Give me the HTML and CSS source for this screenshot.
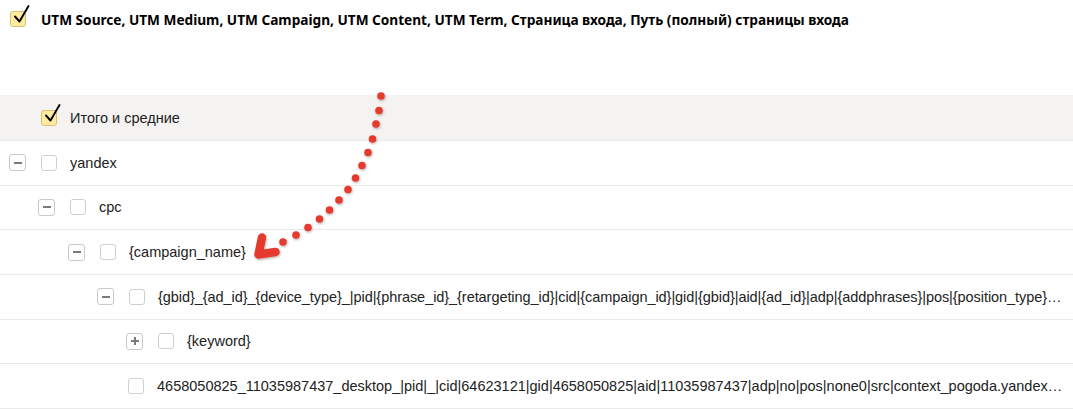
FILE: index.html
```html
<!DOCTYPE html>
<html lang="ru">
<head>
<meta charset="utf-8">
<title>Отчёт</title>
<link rel="stylesheet" href="styles.css">
</head>
<body>
<div class="page">
  <div class="top">
    <span class="cb checked"><svg class="tick" viewBox="0 0 20 22" width="20" height="22"><path d="M3 12.5 L7.5 17.5 L16.5 2" fill="none" stroke="#000" stroke-width="1.9" stroke-linecap="round" stroke-linejoin="round"/></svg></span>
    <span class="title">UTM Source, UTM Medium, UTM Campaign, UTM Content, UTM Term, Страница входа, Путь (полный) страницы входа</span>
  </div>

  <div class="table">
    <div class="row head">
      <span class="cb checked"><svg class="tick" viewBox="0 0 20 22" width="20" height="22"><path d="M3 12.5 L7.5 17.5 L16.5 2" fill="none" stroke="#000" stroke-width="1.9" stroke-linecap="round" stroke-linejoin="round"/></svg></span>
      <span class="label">Итого и средние</span>
    </div>
    <div class="row l0">
      <span class="tg minus"></span><span class="cb"></span><span class="label">yandex</span>
    </div>
    <div class="row l1">
      <span class="tg minus"></span><span class="cb"></span><span class="label">cpc</span>
    </div>
    <div class="row l2">
      <span class="tg minus"></span><span class="cb"></span><span class="label">{campaign_name}</span>
    </div>
    <div class="row l3">
      <span class="tg minus"></span><span class="cb"></span><span class="label wide">{gbid}_{ad_id}_{device_type}_|pid|{phrase_id}_{retargeting_id}|cid|{campaign_id}|gid|{gbid}|aid|{ad_id}|adp|{addphrases}|pos|{position_type}{position}|src|{source_type}_{source}|dvc|{device_type}</span>
    </div>
    <div class="row l4">
      <span class="tg plus"></span><span class="cb"></span><span class="label">{keyword}</span>
    </div>
    <div class="row leaf">
      <span class="cb"></span><span class="label">4658050825_11035987437_desktop_|pid|_|cid|64623121|gid|4658050825|aid|11035987437|adp|no|pos|none0|src|context_pogoda.yandex.ru|dvc|desktop</span>
    </div>
  </div>

  <svg class="arrow" width="1073" height="410" viewBox="0 0 1073 410">
    <defs>
      <filter id="sh" x="-50%" y="-50%" width="200%" height="200%">
        <feDropShadow dx="0.6" dy="1.2" stdDeviation="0.8" flood-color="#000" flood-opacity="0.3"/>
      </filter>
    </defs>
    <g fill="#e53a2f" filter="url(#sh)">
      <circle cx="381" cy="96" r="3.8"/>
      <circle cx="379" cy="110.5" r="3.8"/>
      <circle cx="376" cy="124" r="3.8"/>
      <circle cx="372.5" cy="139" r="3.8"/>
      <circle cx="368" cy="152.5" r="3.8"/>
      <circle cx="362" cy="165.5" r="3.8"/>
      <circle cx="355.5" cy="178" r="3.8"/>
      <circle cx="348" cy="189.5" r="3.8"/>
      <circle cx="339" cy="200" r="3.8"/>
      <circle cx="329.5" cy="210" r="3.8"/>
      <circle cx="319.5" cy="219" r="3.8"/>
      <circle cx="308" cy="227.5" r="3.8"/>
      <circle cx="296" cy="235" r="3.8"/>
      <circle cx="283" cy="242" r="3.8"/>
      <path d="M262 237.5 L258.5 254.5 L275.5 252" fill="none" stroke="#e53a2f" stroke-width="8.5" stroke-linecap="round" stroke-linejoin="round"/>
    </g>
  </svg>
</div>
</body>
</html>
```

FILE: styles.css
```css
html, body {
  margin: 0;
  padding: 0;
  background: #fff;
}

.page {
  position: relative;
  width: 1073px;
  height: 410px;
  overflow: hidden;
  font-family: "Liberation Sans", Arial, sans-serif;
  font-size: 14.5px;
  color: #222;
}

.top {
  display: flex;
  align-items: center;
  height: 38px;
  padding-left: 10px;
  margin-bottom: 57px;
}

.title {
  margin-left: 15px;
  font-family: "Noto Sans", "Open Sans", sans-serif;
  font-weight: 700;
  font-size: 13.65px;
  color: #000;
}

.cb {
  position: relative;
  flex: none;
  box-sizing: border-box;
  width: 16px;
  height: 16px;
  border: 1px solid #cfcfcf;
  border-radius: 3px;
  background: #fff;
}

.cb.checked {
  background: #ffeba0;
  border-color: #d8c17b;
}

.tick {
  position: absolute;
  left: 1px;
  top: -8px;
}

.table {
  display: flex;
  flex-direction: column;
}

.row {
  display: flex;
  align-items: center;
  box-sizing: border-box;
  height: 44.67px;
  padding-right: 9px;
  border-bottom: 1px solid #ebebeb;
  white-space: nowrap;
}

.row.head {
  background: #f4f3f1;
  padding-left: 41px;
  height: 46px;
}

.l0 { padding-left: 9px; }
.l1 { padding-left: 38px; }
.l2 { padding-left: 68px; }
.l3 { padding-left: 97px; }
.l4 { padding-left: 126px; }
.leaf { padding-left: 128px; }

.tg {
  position: relative;
  flex: none;
  box-sizing: border-box;
  width: 17px;
  height: 17px;
  margin-right: 15px;
  border: 1px solid #c9c9c9;
  border-radius: 3px;
  background: #fff;
}

.tg::before {
  content: "";
  position: absolute;
  left: 3.5px;
  top: 6.5px;
  width: 8px;
  height: 2px;
  background: #7a7a7a;
}

.tg.plus::after {
  content: "";
  position: absolute;
  left: 6.5px;
  top: 3.5px;
  width: 2px;
  height: 8px;
  background: #7a7a7a;
}

.label {
  flex: 0 1 auto;
  min-width: 0;
  margin-left: 13px;
  overflow: hidden;
  text-overflow: ellipsis;
}

.label.wide {
  letter-spacing: -0.06px;
}

.arrow {
  position: absolute;
  left: 0;
  top: 0;
  pointer-events: none;
}
```
